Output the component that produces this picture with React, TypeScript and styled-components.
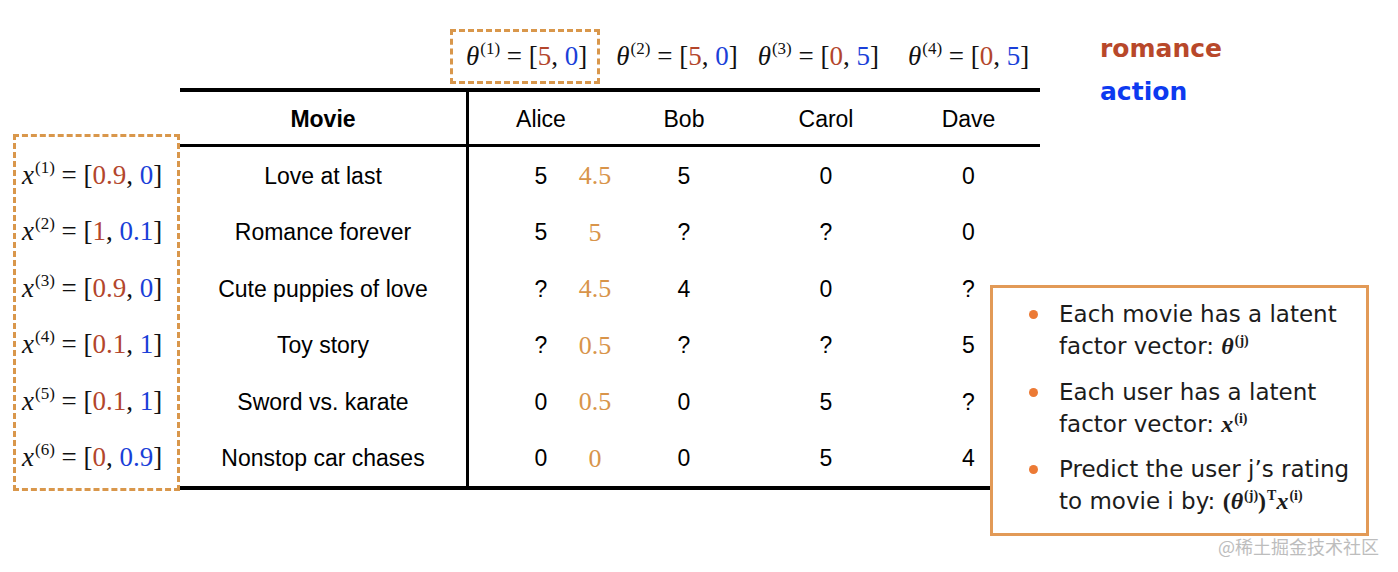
import { FC } from 'react';
import styled, { createGlobalStyle } from 'styled-components';

const GlobalStyle = createGlobalStyle`
    body {
        margin: 0;
        background: #ffffff;
    }
`;

const RED = '#b3462c';
const BLUE = '#1a3fd8';
const ORANGE = '#d8944a';
const DASH = '#d9974b';
const SERIF = '"Liberation Serif", "Times New Roman", serif';
const SANS = '"Liberation Sans", Arial, sans-serif';
const COLS = '289px 144px 142px 142px 143px';
const ROW_H = '56.5px';

type Row = {
    x: [string, string];
    movie: string;
    alice: string;
    pred: string;
    bob: string;
    carol: string;
    dave: string;
};

const rows: Row[] = [
    { x: ['0.9', '0'], movie: 'Love at last', alice: '5', pred: '4.5', bob: '5', carol: '0', dave: '0' },
    { x: ['1', '0.1'], movie: 'Romance forever', alice: '5', pred: '5', bob: '?', carol: '?', dave: '0' },
    { x: ['0.9', '0'], movie: 'Cute puppies of love', alice: '?', pred: '4.5', bob: '4', carol: '0', dave: '?' },
    { x: ['0.1', '1'], movie: 'Toy story', alice: '?', pred: '0.5', bob: '?', carol: '?', dave: '5' },
    { x: ['0.1', '1'], movie: 'Sword vs. karate', alice: '0', pred: '0.5', bob: '0', carol: '5', dave: '?' },
    { x: ['0', '0.9'], movie: 'Nonstop car chases', alice: '0', pred: '0', bob: '0', carol: '5', dave: '4' },
];

// gap = space before each theta label, measured from the table's left edge
const thetas: { v: [string, string]; gap: number; boxed?: boolean }[] = [
    { v: ['5', '0'], gap: 270, boxed: true },
    { v: ['5', '0'], gap: 16 },
    { v: ['0', '5'], gap: 20 },
    { v: ['0', '5'], gap: 29 },
];

const Page = styled.div`
    position: relative;
    width: 1398px;
    height: 572px;
    box-sizing: border-box;
    padding-left: 13px;
    display: flex;
    align-items: flex-start;
    overflow: hidden;
    font-family: ${SANS};
    color: #000;
`;

const LeftCol = styled.div`
    width: 167px;
    padding-top: 134px;
`;

const XBox = styled.div`
    border: 3px dashed ${DASH};
    padding: 10px 0 2px 6px;
`;

const XRow = styled.div`
    height: ${ROW_H};
    display: flex;
    align-items: center;
`;

const MathText = styled.span`
    font-family: ${SERIF};
    font-size: 27px;
    white-space: nowrap;
    color: #111;
`;

const Var = styled.i`
    font-style: italic;
`;

const Sup = styled.sup`
    font-size: 17px;
    vertical-align: 11px;
    line-height: 0;
    margin-left: 1px;
`;

const Num = styled.span<{ $c: string }>`
    color: ${(p) => p.$c};
`;

const Center = styled.div`
    width: 860px;
`;

const ThetaRow = styled.div`
    height: 88px;
    box-sizing: border-box;
    padding-top: 29px;
    display: flex;
    align-items: flex-start;
`;

const ThetaItem = styled.div<{ $gap: number; $boxed?: boolean }>`
    margin-left: ${(p) => p.$gap}px;
    height: 55px;
    box-sizing: border-box;
    display: flex;
    align-items: center;
    padding: ${(p) => (p.$boxed ? '0 10px 0 13px' : '0')};
    border: ${(p) => (p.$boxed ? `3px dashed ${DASH}` : 'none')};
`;

const Table = styled.div`
    border-top: 4px solid #000;
    border-bottom: 4px solid #000;
`;

const HeadRow = styled.div`
    display: grid;
    grid-template-columns: ${COLS};
    height: 52px;
    border-bottom: 3px solid #000;
`;

const BodyRow = styled.div`
    display: grid;
    grid-template-columns: ${COLS};
    height: ${ROW_H};
`;

const Cell = styled.div<{ $bold?: boolean; $divider?: boolean }>`
    display: flex;
    align-items: center;
    justify-content: center;
    padding-top: 2px;
    font-size: 23px;
    font-weight: ${(p) => (p.$bold ? 700 : 400)};
    border-right: ${(p) => (p.$divider ? '3px solid #000' : 'none')};
`;

const AliceCell = styled.div`
    display: grid;
    grid-template-columns: 36px 72px 36px;
    align-items: center;
    padding-top: 2px;
    font-size: 23px;
`;

const Rating = styled.span`
    grid-column: 2;
    text-align: center;
`;

const Pred = styled.span`
    grid-column: 3;
    text-align: center;
    font-family: ${SERIF};
    font-size: 26px;
    color: ${ORANGE};
`;

const Legend = styled.div`
    margin-left: 60px;
    padding-top: 27px;
    font-family: "DejaVu Sans", sans-serif;
    font-weight: 700;
    font-size: 25px;
    line-height: 43px;
`;

const LegendItem = styled.div<{ $c: string }>`
    color: ${(p) => p.$c};
`;

const NoteBox = styled.div`
    position: absolute;
    left: 990px;
    top: 285px;
    width: 379px;
    height: 251px;
    box-sizing: border-box;
    background: #fff;
    border: 3px solid #e29a57;
    padding: 10px 0 0 36px;
    z-index: 1;
`;

const Bullet = styled.div`
    display: flex;
    gap: 21px;
    margin-bottom: 13.5px;
`;

const Dot = styled.span`
    flex: none;
    width: 9px;
    height: 9px;
    margin-top: 12px;
    border-radius: 50%;
    background: #ec7a35;
`;

const BulletText = styled.div`
    width: 292px;
    font-family: "DejaVu Sans", sans-serif;
    font-size: 23px;
    line-height: 32px;
    color: #1c1c1c;
`;

const BoldMath = styled.span`
    font-family: ${SERIF};
    font-weight: 700;
    font-size: 24px;
`;

const SmallSup = styled.sup`
    font-size: 14px;
    vertical-align: 9px;
    line-height: 0;
    margin-left: 1px;
`;

const Watermark = styled.div`
    position: absolute;
    left: 1218px;
    top: 533px;
    font-family: "Noto Sans CJK SC", sans-serif;
    font-size: 18px;
    color: #bdbdbd;
    white-space: nowrap;
    z-index: 2;
`;

const Vec: FC<{ name: string; idx: number; v: [string, string] }> = ({ name, idx, v }) => (
    <MathText>
        <Var>{name}</Var>
        <Sup>({idx})</Sup> = [<Num $c={RED}>{v[0]}</Num>, <Num $c={BLUE}>{v[1]}</Num>]
    </MathText>
);

const App: FC = () => (
    <Page>
        <GlobalStyle />
        <LeftCol>
            <XBox>
                {rows.map((r, i) => (
                    <XRow key={r.movie}>
                        <Vec name="x" idx={i + 1} v={r.x} />
                    </XRow>
                ))}
            </XBox>
        </LeftCol>
        <Center>
            <ThetaRow>
                {thetas.map((t, i) => (
                    <ThetaItem key={i} $gap={t.gap} $boxed={t.boxed}>
                        <Vec name="θ" idx={i + 1} v={t.v} />
                    </ThetaItem>
                ))}
            </ThetaRow>
            <Table>
                <HeadRow>
                    <Cell $bold $divider>Movie</Cell>
                    <Cell>Alice</Cell>
                    <Cell>Bob</Cell>
                    <Cell>Carol</Cell>
                    <Cell>Dave</Cell>
                </HeadRow>
                {rows.map((r) => (
                    <BodyRow key={r.movie}>
                        <Cell $divider>{r.movie}</Cell>
                        <AliceCell>
                            <Rating>{r.alice}</Rating>
                            <Pred>{r.pred}</Pred>
                        </AliceCell>
                        <Cell>{r.bob}</Cell>
                        <Cell>{r.carol}</Cell>
                        <Cell>{r.dave}</Cell>
                    </BodyRow>
                ))}
            </Table>
        </Center>
        <Legend>
            <LegendItem $c="#b8482a">romance</LegendItem>
            <LegendItem $c="#0d3af0">action</LegendItem>
        </Legend>
        <NoteBox>
            <Bullet>
                <Dot />
                <BulletText>
                    Each movie has a latent factor vector:{' '}
                    <BoldMath>
                        <i>θ</i>
                        <SmallSup>(j)</SmallSup>
                    </BoldMath>
                </BulletText>
            </Bullet>
            <Bullet>
                <Dot />
                <BulletText>
                    Each user has a latent factor vector:{' '}
                    <BoldMath>
                        <i>x</i>
                        <SmallSup>(i)</SmallSup>
                    </BoldMath>
                </BulletText>
            </Bullet>
            <Bullet>
                <Dot />
                <BulletText>
                    Predict the user j’s rating to movie i by:{' '}
                    <BoldMath>
                        (<i>θ</i>
                        <SmallSup>(j)</SmallSup>)<SmallSup>T</SmallSup>
                        <i>x</i>
                        <SmallSup>(i)</SmallSup>
                    </BoldMath>
                </BulletText>
            </Bullet>
        </NoteBox>
        <Watermark>@稀土掘金技术社区</Watermark>
    </Page>
);

export default App;
